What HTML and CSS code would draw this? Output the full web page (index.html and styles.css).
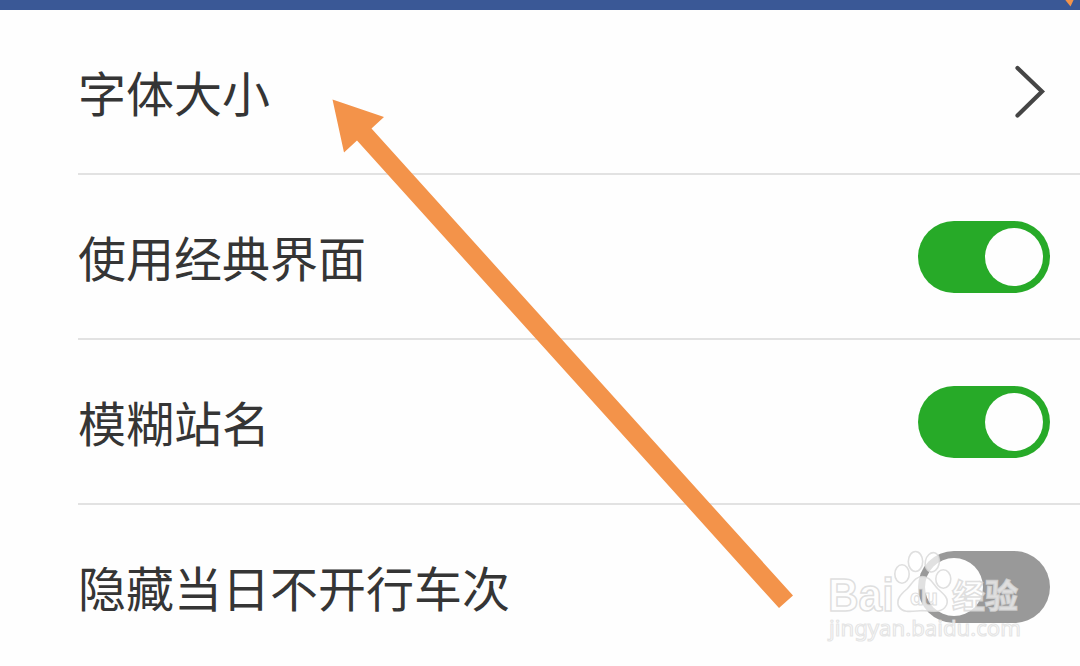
FILE: index.html
```
<!DOCTYPE html>
<html lang="zh-CN">
<head>
  <meta charset="UTF-8">
  <meta name="viewport" content="width=device-width, initial-scale=1.0">
  <title>设置</title>
  <link rel="stylesheet" href="styles.css">
</head>
<body>
  <div class="header"></div>
  <div class="settings">
    <div class="row">
      <span class="label">字体大小</span>
      <svg class="chevron" width="36" height="60" viewBox="0 0 36 60">
        <path d="M6.5 7 L31 30.5 L6.5 54.5" />
      </svg>
    </div>
    <div class="row">
      <span class="label">使用经典界面</span>
      <div class="switch on"><div class="knob"></div></div>
    </div>
    <div class="row">
      <span class="label">模糊站名</span>
      <div class="switch on"><div class="knob"></div></div>
    </div>
    <div class="row">
      <span class="label">隐藏当日不开行车次</span>
      <div class="switch"><div class="knob"></div></div>
    </div>
  </div>

  <svg class="overlay" width="1080" height="666" viewBox="0 0 1080 666">
    <polygon class="arrow" points="1064.5,-1 1074,-1 1070.5,6.5" />
    <polygon class="arrow" points="332.5,99.5 384,117 371.5,128.5 793,595.5 779,608 357,140.5 344,152.5" />
    <defs>
      <mask id="du" maskUnits="userSpaceOnUse" x="890" y="540" width="70" height="80">
        <rect x="890" y="540" width="70" height="80" fill="#fff" />
        <text class="du" x="910" y="605" textLength="28" lengthAdjust="spacingAndGlyphs">du</text>
      </mask>
    </defs>
    <g class="watermark">
      <text class="bai" x="828" y="610.5" textLength="66" lengthAdjust="spacingAndGlyphs">Bai</text>
      <ellipse cx="902" cy="574" rx="7.2" ry="9.3" />
      <ellipse cx="915.5" cy="561.5" rx="7.2" ry="10" />
      <ellipse cx="932.3" cy="562.3" rx="7" ry="9.8" transform="rotate(12 932.3 562.3)" />
      <ellipse cx="943.3" cy="579" rx="7.5" ry="9.3" />
      <path mask="url(#du)" d="M922.5 576.5 C930 576.5 933 584 938 589 C945 595 949 599 946.5 605 C942 614 932 611 922.5 610.5 C913 611 903 614 898.5 606 C896 599 901 594 907 589 C912 584 915 576.5 922.5 576.5 Z" />
      <text class="du-line" x="910" y="605" textLength="28" lengthAdjust="spacingAndGlyphs">du</text>
      <text class="jy" x="952" y="608" textLength="66" lengthAdjust="spacingAndGlyphs">经验</text>
      <text class="url" x="829" y="636" textLength="192" lengthAdjust="spacingAndGlyphs">jingyan.baidu.com</text>
    </g>
  </svg>
</body>
</html>
```

FILE: styles.css
```
* {
  box-sizing: border-box;
}
body {
  margin: 0;
  height: 666px;
  overflow: hidden;
  position: relative;
  background-color: #fefefe;
  font-family: "Noto Sans CJK SC", sans-serif;
}
.header {
  height: 10px;
  background-color: #3a5896;
}
.settings {
  padding-left: 78px;
}
.row {
  display: flex;
  justify-content: space-between;
  align-items: flex-start;
  height: 165px;
  padding: 46px 30px 0 0;
  border-bottom: 2px solid #e2e2e2;
}
.row:last-child {
  border-bottom: none;
}
.label {
  font-size: 48px;
  line-height: 70px;
  color: #353535;
}
.chevron {
  margin: 5px 3px 0 0;
}
.chevron path {
  fill: none;
  stroke: #454545;
  stroke-width: 4.2;
  stroke-linecap: round;
}
.switch {
  display: flex;
  width: 132px;
  height: 72px;
  padding: 7px;
  border-radius: 36px;
  background-color: #999;
}
.switch.on {
  justify-content: flex-end;
  background-color: #27aa28;
}
.knob {
  width: 58px;
  height: 58px;
  border-radius: 50%;
  background-color: #fefefe;
}
.overlay {
  position: absolute;
  top: 0;
  left: 0;
}
.arrow {
  fill: #f3934a;
}
.watermark {
  fill: rgba(255, 255, 255, 0.7);
  stroke: rgba(215, 215, 215, 0.8);
  stroke-width: 1.6;
}
.bai {
  font: bold 46px "Liberation Sans", sans-serif;
}
.du {
  font: bold 21px "DejaVu Sans", sans-serif;
  fill: #000;
  stroke: none;
}
.du-line {
  font: bold 21px "DejaVu Sans", sans-serif;
  fill: none;
  stroke-width: 1.2;
}
.jy {
  font: bold 33px "Noto Sans CJK SC", sans-serif;
}
.url {
  font: 22px "Noto Sans", sans-serif;
  stroke: rgba(222, 222, 222, 0.8);
  stroke-width: 1.2;
}
```
